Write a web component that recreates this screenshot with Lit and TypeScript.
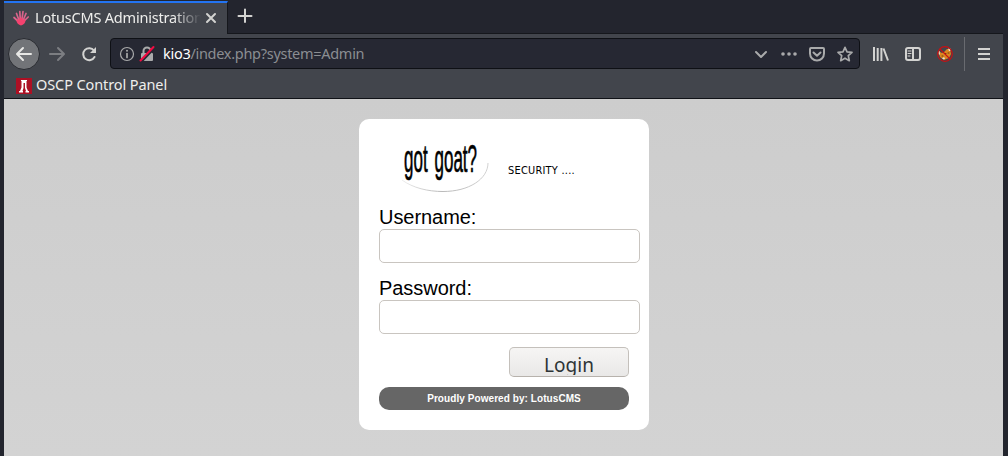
import { LitElement, html, css, svg } from "lit";
import { customElement } from "lit/decorators.js";

@customElement("browser-chrome")
class BrowserChrome extends LitElement {
  static styles = css`
    :host { display: block; font: 14.500px "Noto Sans", sans-serif; letter-spacing: -.2px; color: #eeeeec; }
    svg { display: block; flex: none; overflow: visible; }
    .tabs { display: flex; height: 33px; background: #23252e; }
    .tab { display: flex; align-items: center; width: 224px; height: 32px; margin-top: 1px; box-sizing: border-box; border-top: 2px solid #2374f2; background: #42454c; padding-left: 9px; border-right: 1px solid #15171c; }
    .title { width: 166px; margin-left: 6px; overflow: hidden; white-space: nowrap; line-height: 22px; padding-bottom: 2px; -webkit-mask-image: linear-gradient(to right, #000 138px, transparent 166px); }
    .close { margin-left: 2px; }
    .plus { margin: 9px 0 0 9px; }
    .bar { display: flex; align-items: center; height: 40px; background: #42454c; position: relative; border-top: 1px solid #15171c; box-sizing: border-box; }
    .tab-join { position: absolute; top: -1px; left: 0; width: 223px; height: 1px; background: #42454c; }
    .back { flex: none; width: 32px; height: 32px; box-sizing: border-box; border: 1px solid #292b31; border-radius: 50%; background: #727478; margin-left: 4px; display: grid; place-items: center; }
    .fwd { margin-left: 9px; }
    .reload { margin-left: 16px; }
    .url { display: flex; flex: none; align-items: center; width: 750px; height: 31px; box-sizing: border-box; border: 1px solid #0e1015; border-radius: 4px; background: #262833; margin-left: 13px; padding: 0 6px 0 8px; }
    .lock { margin-left: 4px; }
    .address { margin-left: 8px; line-height: 22px; padding-bottom: 1px; flex: 1; color: #8b8e92; white-space: nowrap; letter-spacing: -.29px; }
    .host { color: #fff; }
    .actions { display: flex; gap: 12px; }
    .tools { display: flex; gap: 16px; margin-left: 13px; }
    .rule { width: 1px; height: 34px; background: #696b70; margin: 0 11px; }
    .bookmarks { display: flex; align-items: center; height: 25px; background: #42454c; border-bottom: 1px solid #101217; padding-left: 12px; }
    .bookmark { margin-left: 4px; line-height: 22px; padding-bottom: 3px; white-space: nowrap; letter-spacing: -.1px; }
  `;

  private icon(body: unknown, cls = "", color = "#d3d3d1") {
    return html`<svg class=${cls} width="16" height="16" viewBox="0 0 16 16" fill="none" stroke=${color} stroke-width="2" stroke-linecap="round" stroke-linejoin="round">${body}</svg>`;
  }

  render() {
    const dim = "#a9aaab";
    return html`
      <div class="tabs">
        <div class="tab">
          ${this.icon(svg`
            <path d="M7 13L1 7.500M7 13L3.500 3.500M7.500 13L6.800 1.500M8.500 13L10 1.500M9 13L13 3.500M9 13L15.200 7" stroke="#d9648b" stroke-width="1.700"/>
            <path d="M8 15.500C5.500 15 3.500 13 3.500 10.500L5 9l1 1 1-3 1 2 1-2 1 3 1.500-1 1 1.500C12.500 13 10.500 15 8 15.500z" fill="#f5426f" stroke="none"/>`)}
          <div class="title">LotusCMS Administration</div>
          ${this.icon(svg`<path d="M4 4l8 8M12 4l-8 8"/>`, "close")}
        </div>
        ${this.icon(svg`<path d="M8 .5v12.500M1.500 7h13"/>`, "plus")}
      </div>
      <div class="bar">
        <div class="tab-join"></div>
        <div class="back">${this.icon(svg`<path d="M15 8H1.500M7 2L1 8l6 6"/>`, "", "#e8e8e6")}</div>
        ${this.icon(svg`<path d="M1 8h13.500M9 2l6 6-6 6"/>`, "fwd", "#7c7e82")}
        ${this.icon(svg`<path d="M13 4.500A6 6 0 1 0 13.500 11" /><path d="M15 1v6H9z" fill="#d3d3d1" stroke="none"/>`, "reload")}
        <div class="url">
          ${this.icon(svg`<circle cx="8" cy="8" r="6.500" stroke-width="1.200"/><path d="M8 7.500v4" stroke-width="1.700"/><circle cx="8" cy="4.700" r="1" fill=${dim} stroke="none"/>`, "", dim)}
          ${this.icon(svg`<rect x="2" y="7" width="12" height="8" rx="1" fill=${dim} stroke="none"/><path d="M4.500 7V5a3.500 3.500 0 0 1 7 0v2"/><path d="M2.200 15.500L15 2" stroke="#262833" stroke-width="3"/><path d="M1.500 14.500L14.500 1" stroke="#f50a42"/>`, "lock", dim)}
          <div class="address"><span class="host">kio3</span>/index.php?system=Admin</div>
          <div class="actions">
            ${this.icon(svg`<path d="M3 6l5 5 5-5"/>`, "", dim)}
            ${this.icon(svg`<g fill=${dim} stroke="none"><circle cx="2" cy="8" r="1.800"/><circle cx="8" cy="8" r="1.800"/><circle cx="14" cy="8" r="1.800"/></g>`, "", dim)}
            ${this.icon(svg`<path d="M2 2h12q1 0 1 1v4.500a7 7 0 0 1-14 0V3q0-1 1-1z"/><path d="M4.500 6.500L8 9.800l3.500-3.300"/>`, "", dim)}
            ${this.icon(svg`<path d="M8 1.300l2 4.500 5 .5-3.700 3.400 1 5L8 12.200l-4.300 2.500 1-5L1 6.300l5-.5z" stroke-width="1.700"/>`, "", dim)}
          </div>
        </div>
        <div class="tools">
          ${this.icon(svg`<path d="M1 1v14M4.700 2v13M8.400 2v13M10.500 2.500l4.500 12" stroke-linecap="butt"/>`)}
          ${this.icon(svg`<rect x="1" y="2" width="14" height="12" rx="2"/><path d="M8 2v12"/><path d="M3 5h3M3 7.500h3M3 10h2" stroke-width="1"/>`)}
          ${this.icon(svg`
            <path d="M1 5l4 2 2-1 3-3 3 0 1 5-2 4-5 2-4-3z" fill="#dc8620" stroke="none"/>
            <path d="M1 5l1.500 0 .5 3-1 1zM11 2.500l2.500 0 0 2.500-1.500 0zM5 12.500l2-1.500 1 1.500-1 1z" fill="#e8dfd3" stroke="none"/>
            <path d="M8 7.500h1M11 7h1M5 10h1" stroke="#693d12" stroke-width="1"/>
            <circle cx="8" cy="8" r="7.300" stroke="#c81013" stroke-width="1.200"/><path d="M3 3l10 10" stroke="#c81013" stroke-width="1.100"/>`)}
        </div>
        <div class="rule"></div>
        ${this.icon(svg`<path d="M2 3h12M2 8h12M2 13h12" stroke-linecap="butt"/>`)}
      </div>
      <div class="bookmarks">
        <svg width="16" height="16" viewBox="0 0 16 16"><path fill="#ad1024" d="M0 0h16v16H0z"/><path fill="#fff" d="M5 2h6v1h-.5v6.500l1.500 3.500h1v1.500H9.500V13h.5L9 10V5H7.500v5l-1 3H7v1.500H3V13h1l1.500-3.500V3H5z"/></svg>
        <div class="bookmark">OSCP Control Panel</div>
      </div>
    `;
  }
}

@customElement("login-card")
class LoginCard extends LitElement {
  static styles = css`
    :host { display: block; width: 290px; height: 311px; box-sizing: border-box; padding: 20px; background: #fff; border-radius: 10px; font: 20px "Liberation Sans", sans-serif; color: #000; }
    .logo { display: block; height: 67px; width: 250px; }
    .mark { font: 39px "Liberation Sans", sans-serif; word-spacing: 5px; }
    .small { font: 9.800px "DejaVu Sans", sans-serif; letter-spacing: .25px; }
    label { display: block; line-height: 23px; letter-spacing: -.05px; }
    input { display: block; box-sizing: border-box; width: 261px; height: 34px; border: 1px solid #c9c5c0; border-radius: 5px; background: #fff; margin: 0 0 14px; outline: none; }
    button { display: flex; justify-content: center; align-items: flex-start; box-sizing: border-box; width: 120px; height: 30px; margin: -1px 0 10px auto; padding: 4px 0 0; overflow: hidden; border: 1px solid #c4c0bb; border-bottom-color: #b7b2ac; border-radius: 5px; background: linear-gradient(#f6f5f4, #e9e8e7); color: #2e3436; font: 19px/27px "Noto Sans", sans-serif; }
    .label { display: block; height: 23px; overflow: hidden; }
    .powered { height: 23px; border-radius: 10px; background: #666; color: #fff; text-align: center; font: bold 10px/23px "Liberation Sans", sans-serif; letter-spacing: .07px; }
  `;

  render() {
    return html`
      <svg class="logo" viewBox="0 0 250 67">
        <defs>
          <linearGradient id="rim" x1="0" x2="1" y1="0" y2="0">
            <stop offset="0" stop-color="#ededed"/><stop offset=".45" stop-color="#b8b8b8"/><stop offset="1" stop-color="#d2d2d2"/>
          </linearGradient>
        </defs>
        <path d="M23 41C34 49 49 52.500 64 52.500C90 52.500 109 40 109 24" fill="none" stroke="url(#rim)" stroke-width="1"/>
        <text class="mark" x="25" y="33" textLength="73" lengthAdjust="spacingAndGlyphs" stroke="#000" stroke-width=".7">got goat?</text>
        <text class="small" x="129" y="35">SECURITY ....</text>
      </svg>
      <label for="user">Username:</label>
      <input id="user" type="text" />
      <label for="pass">Password:</label>
      <input id="pass" type="password" />
      <button type="button"><span class="label">Login</span></button>
      <div class="powered">Proudly Powered by: LotusCMS</div>
    `;
  }
}

@customElement("app-root")
class AppRoot extends LitElement {
  static styles = css`
    :host { display: block; box-sizing: border-box; height: 456px; padding: 0 5px 0 4px; background: #23252e; overflow: hidden; }
    .page { display: flex; justify-content: center; align-items: flex-start; height: 358px; box-sizing: border-box; padding: 20px 0 0 1px; background: linear-gradient(#cdcdcd, #d3d3d3); }
  `;

  render() {
    return html`<browser-chrome></browser-chrome><main class="page"><login-card></login-card></main>`;
  }
}
